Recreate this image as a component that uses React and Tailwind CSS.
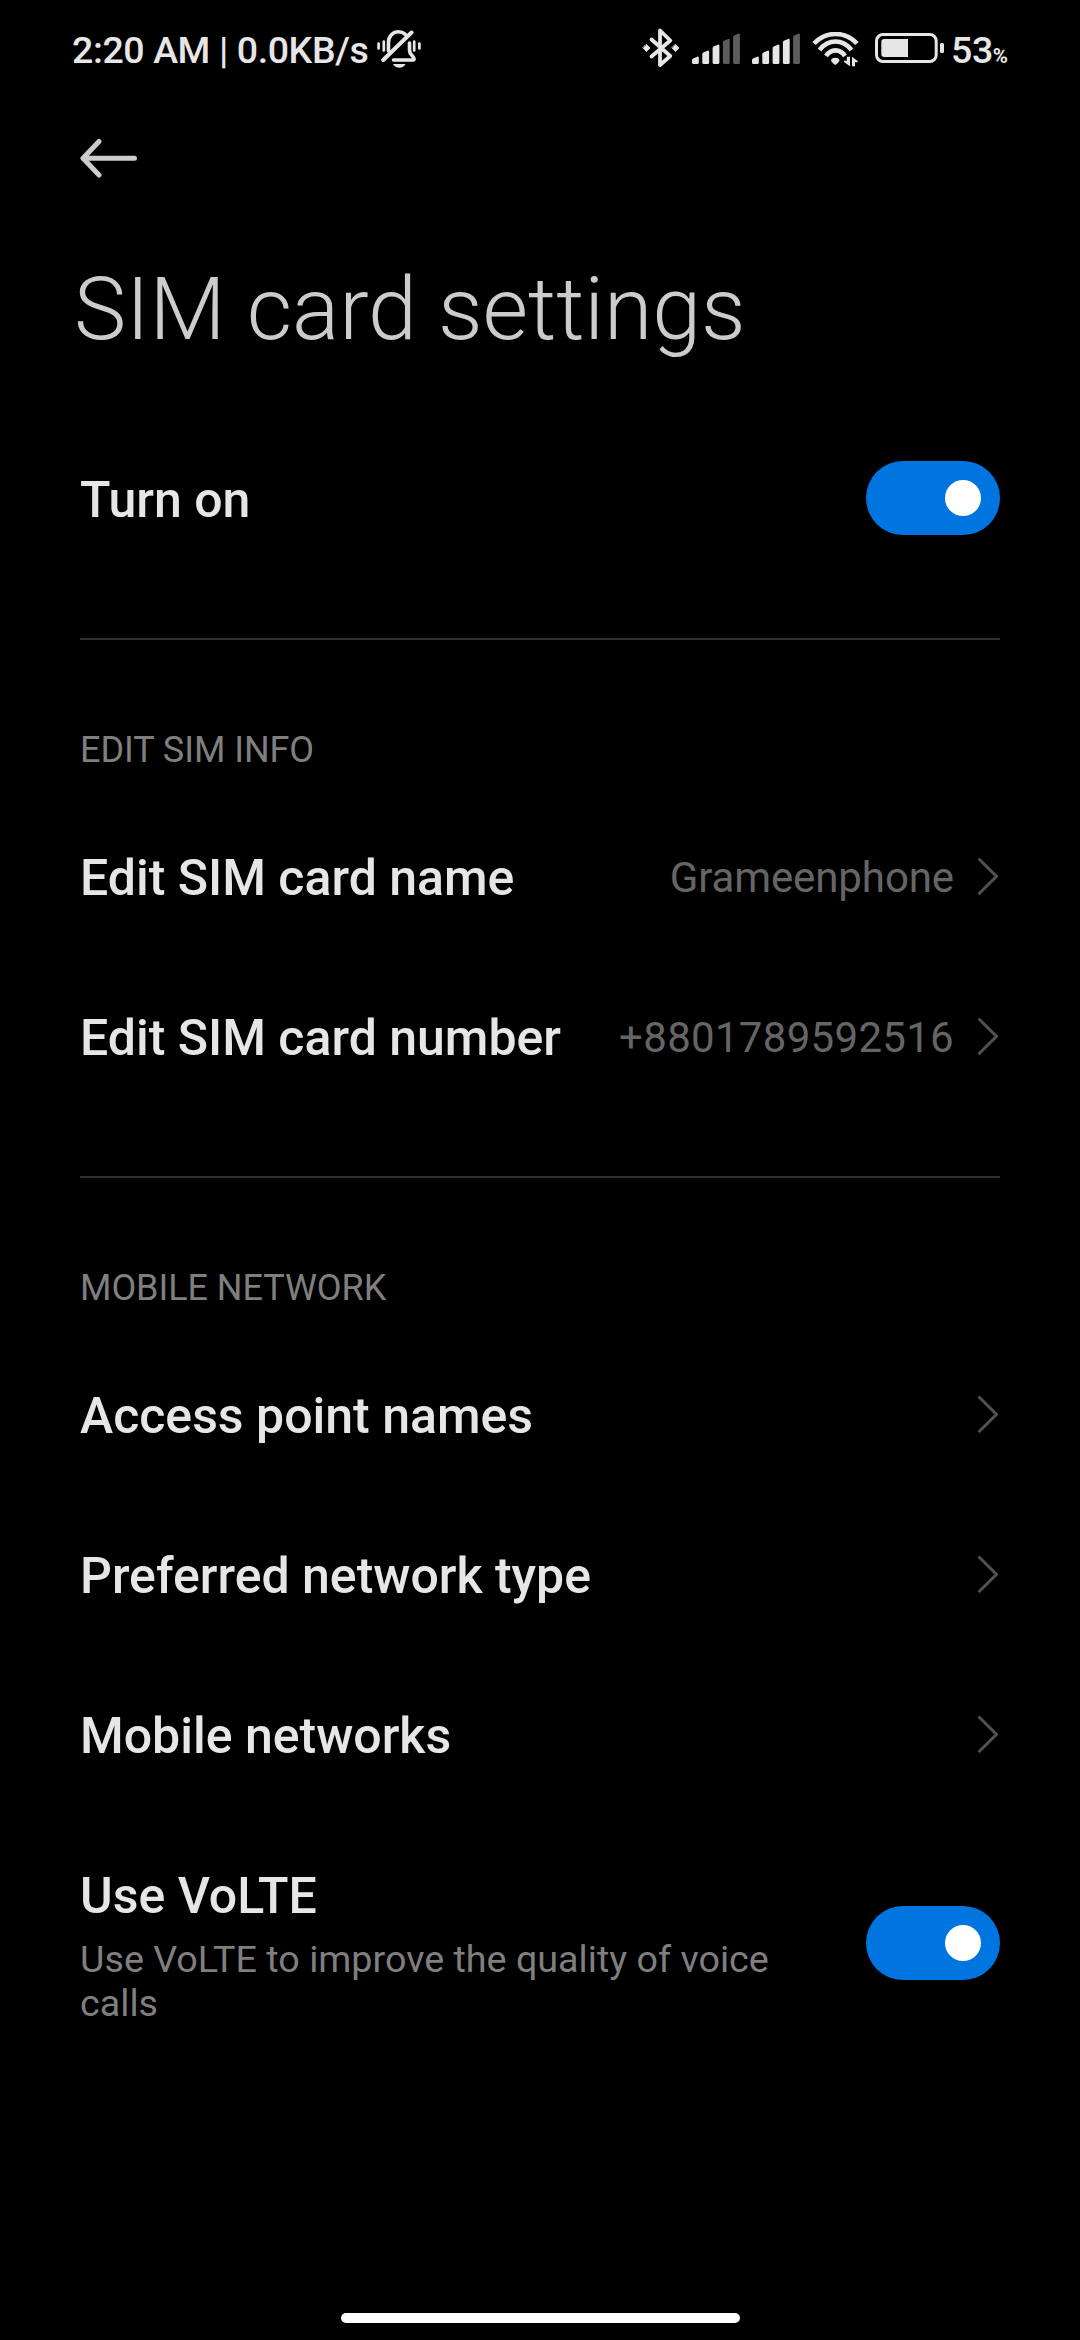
import { useState } from 'react';

const SIM_INFO = [
  { label: 'Edit SIM card name', value: 'Grameenphone', valueClass: 'tracking-[-0.1px]' },
  { label: 'Edit SIM card number', value: '+8801789592516', valueClass: 'tracking-[0.3px]' },
];

const NETWORK_ITEMS = ['Access point names', 'Preferred network type', 'Mobile networks'];

// x and top y of each signal bar inside the 48x34 box
const BARS = [[0, 23.5], [10.3, 17.5], [20.6, 11.5], [30.9, 5.7], [41.1, 0.5]];

function Signal({ level }) {
  return (
    <svg width="48" height="34" viewBox="0 0 48 34" className="shrink-0">
      {BARS.map(([x, y], i) => (
        <path
          key={x}
          d={`M${x} ${y + 3.5} Q${x} ${y + 2.5} ${x + 1} ${y + 2} L${x + 5.2} ${y + 0.2} Q${x + 6.8} ${y - 0.3} ${x + 6.8} ${y + 1.2} V29.5 Q${x + 6.8} 31 ${x + 5.3} 31 H${x + 1.5} Q${x} 31 ${x} 29.5 Z`}
          fill={i < level ? '#e6e6e6' : '#5c5c5c'}
        />
      ))}
    </svg>
  );
}

function MutedBell() {
  return (
    <svg width="46" height="40" viewBox="0 0 46 40" fill="none" stroke="#e6e6e6" strokeWidth="2.7" strokeLinecap="round" className="shrink-0">
      <path d="M2.6 13.5v5M7.8 11.5v9M38.2 11.5v9M43.4 13.5v5" />
      <path d="M12.5 21V12.5C12.5 6 17 1.8 22.5 1.8c2.8 0 5 .9 6.8 2.5" strokeWidth="3.6" />
      <path d="M7.2 30 35.5 2.5" strokeWidth="4" />
      <path d="M33.5 13v7.5c0 2 .8 3.3 2.5 5 2.4 2.5 2.6 4.5 1.2 4.5H17.5" strokeWidth="3.6" strokeLinejoin="round" />
      <path d="M17 34h12.5c-1.2 2.5-3.500 3.700-6.200 3.700S18.200 36.500 17 34Z" fill="#e6e6e6" stroke="none" />
    </svg>
  );
}

function Bluetooth() {
  return (
    <svg width="38" height="44" viewBox="0 0 38 44" fill="none" stroke="#e6e6e6" strokeWidth="3.8" strokeLinejoin="round" strokeLinecap="round" className="shrink-0">
      <path d="M9.5 11.5 28.3 28 18 37V2.5L28.3 12.5 9.5 28.5" />
      <path d="M4.5 16.5 8 20l-3.5 3.5L1 20ZM33.5 16.5 37 20l-3.5 3.5L30 20Z" fill="#e6e6e6" strokeWidth="0.8" />
    </svg>
  );
}

function Wifi() {
  return (
    <svg width="47" height="36" viewBox="0 0 47 36" fill="none" stroke="#e6e6e6" strokeWidth="4.6" className="shrink-0">
      <path d="M2 11.5C14-1.2 33-1.2 45 11.5" />
      <path d="M7.5 18c9-11.3 23-11.3 32 0" />
      <path d="M14 24c5-7.5 14-7.5 19 0" />
      <path d="M23.3 25.7c2.5 0 4.2 1.2 4.2 2.7 0 1-3.2 4.4-4.2 4.4s-4.3-3.4-4.3-4.4c0-1.5 1.8-2.7 4.3-2.7Z" fill="#e6e6e6" stroke="none" />
      <path d="M38 24.7v9.6L32 30v-1.2h2.8v-4.1ZM40 34.3v-9.6l5.7 4.3v1.3H43v4Z" fill="#e6e6e6" stroke="none" />
    </svg>
  );
}

function Battery() {
  return (
    <svg width="70" height="34" viewBox="0 0 70 34" className="shrink-0">
      <rect x="1.5" y="1.5" width="59.7" height="27" rx="6.5" fill="none" stroke="#e6e6e6" strokeWidth="3" />
      <path d="M9.3 6H33v18H9.3q-3 0-3-3V9q0-3 3-3Z" fill="#e6e6e6" />
      <rect x="65" y="10" width="4" height="10" rx="1.5" fill="#e6e6e6" />
    </svg>
  );
}

function StatusBar() {
  return (
    <div className="h-[100px] px-[72px] flex items-center text-[37.5px] leading-[44px] font-medium text-[#e6e6e6]">
      <div className="w-[570px] shrink-0 flex items-center">
        <span className="w-[304px] whitespace-pre tracking-[-0.4px]">2:20 AM | 0.0KB/s</span>
        <MutedBell />
      </div>
      <div className="flex items-center">
        <Bluetooth />
        <div className="ml-3 flex gap-3"><Signal level={3} /><Signal level={4} /></div>
        <div className="ml-3"><Wifi /></div>
        <div className="ml-4"><Battery /></div>
        <div className="ml-1.5 flex items-baseline tracking-[-0.4px]">
          53<span className="text-[20.5px] leading-none font-bold">%</span>
        </div>
      </div>
    </div>
  );
}

function Chevron() {
  return (
    <svg width="22" height="38" viewBox="0 0 22 38" fill="none" stroke="#505050" strokeWidth="3" strokeLinecap="round" strokeLinejoin="round" className="shrink-0">
      <path d="M1.5 1.5 18.5 18.4 1.5 35.3" />
    </svg>
  );
}

function Toggle({ label }) {
  const [on, setOn] = useState(true);

  return (
    <button
      type="button"
      role="switch"
      aria-checked={on}
      aria-label={label}
      onClick={() => setOn(!on)}
      className={`w-[134px] h-[74px] px-[19px] rounded-full flex items-center shrink-0 ${on ? 'bg-[#0074df] justify-end' : 'bg-[#333333] justify-start'}`}
    >
      <span className="size-9 rounded-full bg-white" />
    </button>
  );
}

function Row({ label, value, valueClass }) {
  return (
    <div className="h-40 flex items-center">
      <span className="flex-1 pt-0.5 text-[50px] leading-[58px] font-medium text-[#e6e6e6]">{label}</span>
      {value && <span className={`mr-6 pt-0.5 text-[42px] leading-[50px] text-[#656565] ${valueClass}`}>{value}</span>}
      <Chevron />
    </div>
  );
}

function SectionTitle({ children }) {
  return <h2 className="h-[42px] text-[36px] leading-[42px] tracking-[-0.05px] text-[#7f7f7f]">{children}</h2>;
}

export default function App() {
  return (
    <div className="w-[1080px] h-[2340px] bg-black flex flex-col overflow-hidden font-['Roboto',sans-serif]">
      <StatusBar />

      <main className="flex-1 px-20 flex flex-col">
        <button type="button" aria-label="Back" className="mt-[38px] w-[58px] h-10">
          <svg width="58" height="40" viewBox="0 0 58 40" fill="none" stroke="#cccccc" strokeWidth="5" strokeLinecap="round" strokeLinejoin="round">
            <path d="M19 3.5 3 20.3 19 37M3 20.3h51.5" />
          </svg>
        </button>

        <h1 className="mt-[79px] -ml-1.5 text-[88px] leading-[104px] font-light tracking-[-0.1px] text-[#cccccc]">SIM card settings</h1>

        <div className="mt-[57px] h-40 flex items-center justify-between">
          <span className="pt-1 text-[50px] leading-[58px] font-medium text-[#e6e6e6]">Turn on</span>
          <Toggle label="Turn on" />
        </div>

        <div className="mt-[60px] mb-[89px] h-0.5 shrink-0 bg-[#303030]" />

        <SectionTitle>EDIT SIM INFO</SectionTitle>
        <div className="mt-[26px]">
          {SIM_INFO.map((item) => <Row key={item.label} {...item} />)}
        </div>

        <div className="mt-[59px] mb-[89px] h-0.5 shrink-0 bg-[#303030]" />

        <SectionTitle>MOBILE NETWORK</SectionTitle>
        <div className="mt-[26px]">
          {NETWORK_ITEMS.map((label) => <Row key={label} label={label} />)}
        </div>

        {/* VoLTE */}
        <div className="mt-[52px] flex items-start justify-between">
          <div className="w-[720px]">
            <p className="text-[50px] leading-[58px] font-medium text-[#e6e6e6]">Use VoLTE</p>
            <p className="mt-3 text-[37.7px] leading-[44px] text-[#7f7f7f]">Use VoLTE to improve the quality of voice calls</p>
          </div>
          <div className="mt-[39px]"><Toggle label="Use VoLTE" /></div>
        </div>
      </main>

      {/* Home indicator */}
      <div className="mb-[17px] h-2.5 w-[399px] mx-auto rounded-full bg-white shrink-0" />
    </div>
  );
}
